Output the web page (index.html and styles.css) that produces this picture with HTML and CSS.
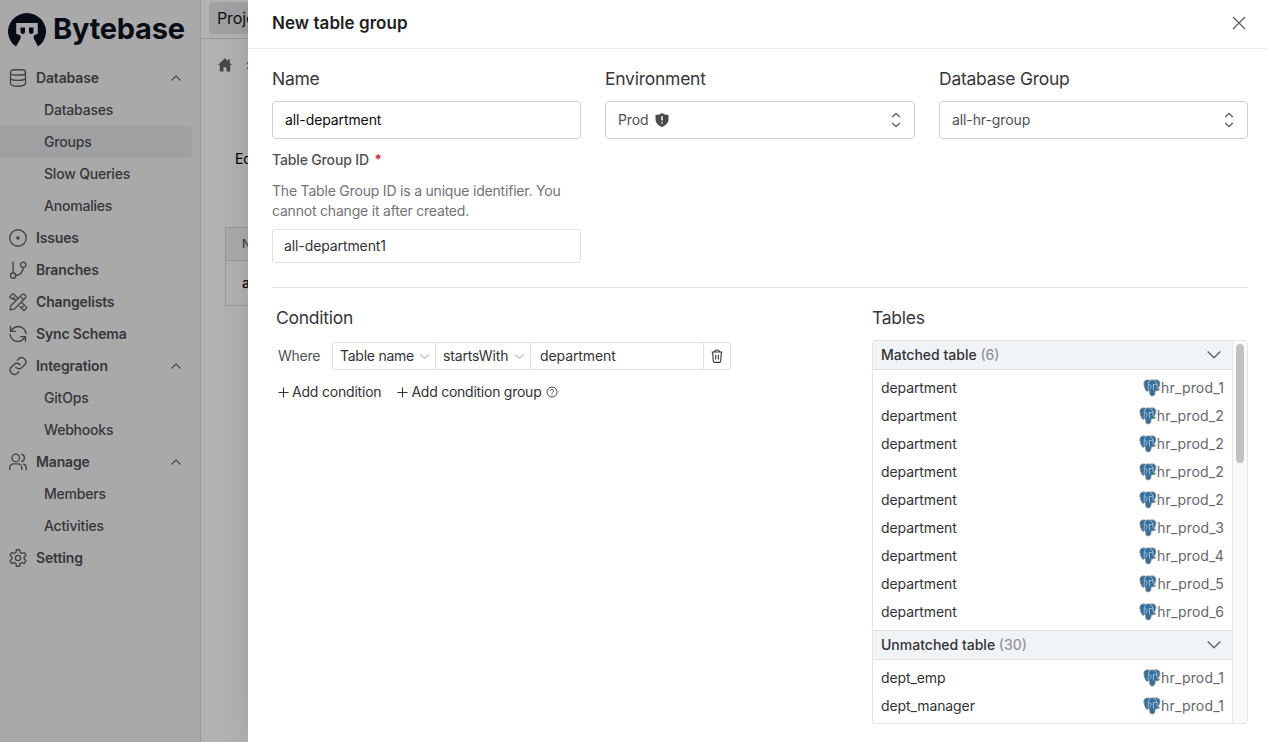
FILE: index.html
```html
<!DOCTYPE html>
<html lang="en">
<head>
<meta charset="utf-8">
<title>Bytebase</title>
<link rel="stylesheet" href="styles.css">
</head>
<body>
<svg class="defs" aria-hidden="true">
  <symbol id="chev-up" viewBox="0 0 12 8"><path d="M1.800 6.200 6 2l4.200 4.200"/></symbol>
  <symbol id="chev-down" viewBox="0 0 16 10"><path d="m1.700 1.500 6.300 6.300 6.300-6.300"/></symbol>
  <symbol id="updown" viewBox="0 0 12 16"><path d="M2.200 5 6 1.500 9.800 5M2.200 11 6 14.500 9.800 11"/></symbol>
  <symbol id="plus" viewBox="0 0 12 12"><path d="M6 .5v11M.5 6h11"/></symbol>
  <symbol id="pg" viewBox="0 0 18 18">
    <path d="M4.500 1C2.200 1 .8 2.400 1 5c.2 2.600 1.500 6.200 2.600 7.100.9.700 1.700-.3 2.300-.9l.7.3c.3 1.900 0 4.300 1.100 5 1.200.7 3.600.6 4.100-1.500l.3-3.200c1.900.1 3.800-.3 4.600-1.300-.4-.3-1.500-.1-2.200-.2 1.500-2 2.800-5.400 2.200-7C16.200 1.600 14.700.8 12.900.9c-.9 0-1.600.3-2.200.4C9.800.9 8.400.8 7.200 1.500 6.500 1.200 5.500 1 4.500 1Z" fill="#336f9e" stroke="#82888e" stroke-width="1"/>
    <path d="M6.900 2C5.300 3 5 5.500 5.300 7.300c.2 1.300 0 2.500-.3 3.300M12 2c2 1.600 2.400 4.200 2.100 6.300M6 6c1.200-.4 2.400 0 2.200 1.200-.2 1-.3 1.500-1.200 3M10.400 5.500v5.500M10.600 5.700c.9-.5 1.900-.4 2.700-.1" fill="none" stroke="#c3d3e0" stroke-width=".8" stroke-linecap="round"/>
  </symbol>
</svg>

<div class="app">
  <aside class="sidebar">
    <div class="logo">
      <svg class="logo-mark" viewBox="0 0 38 38">
        <path d="M8 35.600A19 18.500 0 1 1 30 35.600L25.800 27.500V24.500L29.800 22.800V12H8.200V22.800L12.600 24.500V27.500Z"/>
        <path d="M12.500 16.500h4.500v4.200a2.250 2.250 0 0 1-4.500 0ZM21 16.500h4.500v4.200a2.250 2.250 0 0 1-4.500 0Z"/>
      </svg>
      <span class="logo-text">Bytebase</span>
    </div>
    <nav class="nav">
      <a class="item"><svg viewBox="0 0 24 24"><rect x="2" y="1" width="20" height="7" rx="5" ry="3.500"/><path d="M2 5v14c0 2.500 4 4 10 4s10-1.500 10-4V5M2 12c0 2 4 3.200 10 3.200S22 14 22 12"/></svg><span>Database</span><svg class="caret"><use href="#chev-up"/></svg></a>
      <a class="sub">Databases</a>
      <a class="sub active">Groups</a>
      <a class="sub">Slow Queries</a>
      <a class="sub">Anomalies</a>
      <a class="item"><svg viewBox="0 0 24 24"><circle cx="12" cy="12" r="11"/><circle cx="12" cy="12" r="1.500" class="solid"/></svg><span>Issues</span></a>
      <a class="item"><svg viewBox="0 0 24 24"><path d="M5.500 1.500V16M8.500 19.500C15 19 18.500 14.500 19 8.500"/><circle cx="5.500" cy="19.500" r="3.500"/><circle cx="19" cy="5" r="3.500"/></svg><span>Branches</span></a>
      <a class="item"><svg viewBox="0 0 24 24"><path d="m15 4.500 4.500 4.500L7 21.500 1.500 22.500 2.500 17 17 2.500a3.100 3.100 0 0 1 4.500 4.500L19.500 9M9.500 9.500 1.500 6.500a1.500 1.500 0 0 1 0-2l3-3a1.500 1.500 0 0 1 2 0l6 6M5 8l2.500-2.500M14.500 18l4.500 4.500a1.500 1.500 0 0 0 2 0l2-2a1.500 1.500 0 0 0 0-2L17 13M16.500 20l2.500-2.500"/></svg><span>Changelists</span></a>
      <a class="item"><svg viewBox="0 0 24 24"><path d="M2 2v6.500h6.500M2.500 8.500C5 4 9 2 13 2a10 10 0 0 1 9.500 9.500M22 22v-6.500h-6.500M21.500 15.500C19 20 15 22 11 22a10 10 0 0 1-9.500-9.500"/></svg><span>Sync Schema</span></a>
      <a class="item"><svg viewBox="0 0 24 24"><path d="M9 13.500a5.500 5.500 0 0 0 8.300.6l4-4a5.700 5.700 0 0 0-8-8L11 4.300M15 10.500a5.500 5.500 0 0 0-8.300-.6l-4 4a5.700 5.700 0 0 0 8 8l2.300-2.300"/></svg><span>Integration</span><svg class="caret"><use href="#chev-up"/></svg></a>
      <a class="sub">GitOps</a>
      <a class="sub">Webhooks</a>
      <a class="item"><svg viewBox="0 0 24 24"><circle cx="9" cy="6.500" r="5"/><path d="M1 22v-2.500a5 5 0 0 1 5-5h6a5 5 0 0 1 5 5V22M17 1.700a5 5 0 0 1 0 9.600M19.500 15a5 5 0 0 1 3.500 4.700V22"/></svg><span>Manage</span><svg class="caret"><use href="#chev-up"/></svg></a>
      <a class="sub">Members</a>
      <a class="sub">Activities</a>
      <a class="item"><svg viewBox="0 0 24 24"><path d="M10 1h4l.9 3.700 2.200 1.200 3.400-1 2.100 3.600-2.500 2.500v2l2.500 2.500-2.100 3.600-3.400-1-2.200 1.200L14 23h-4l-.9-3.700-2.200-1.200-3.400 1-2.100-3.600L3.900 13v-2L1.400 8.500l2.100-3.600 3.400 1 2.200-1.200Z"/><circle cx="12" cy="12" r="3.500"/></svg><span>Setting</span></a>
    </nav>
  </aside>
  <main class="page">
    <header class="topbar"><span class="project">Project</span></header>
    <div class="crumbs">
      <svg viewBox="0 0 14 14"><path d="M7 .3 0 7h1.800v6.500h3.700V9.300h3v4.200h3.700V7H14l-2.200-2.200V1.300h-1.700v1.900Z"/></svg>
      <span>›</span>
    </div>
    <div class="actions">Edit</div>
    <div class="grid">
      <div class="grid-head">Name</div>
      <div class="grid-row">all-hr</div>
    </div>
  </main>
</div>
<div class="mask"></div>

<section class="drawer">
  <header class="drawer-head">
    <h1>New table group</h1>
    <svg viewBox="0 0 14 14"><path d="m1 1 12 12M13 1 1 13"/></svg>
  </header>
  <div class="drawer-body">
    <div class="fields">
      <div class="field">
        <label class="label">Name</label>
        <div class="box strong">all-department</div>
        <div class="id-label">Table Group ID <b>*</b></div>
        <p class="help">The Table Group ID is a unique identifier. You<br>cannot change it after created.</p>
        <div class="box small">all-department1</div>
      </div>
      <div class="field">
        <label class="label">Environment</label>
        <div class="box select"><span>Prod</span>
          <svg class="shield" viewBox="0 0 14 14"><path d="M7 0Q9.500 2 13.500 2v4.500C13.500 10 10.500 12.700 7 14 3.500 12.700.5 10 .5 6.500V2Q4.500 2 7 0Z" fill="#4b4b4f"/><path d="M7 3.200v4.300M7 9.300v1.200" stroke="#fff" stroke-width="1.500"/></svg>
          <svg class="updown"><use href="#updown"/></svg></div>
      </div>
      <div class="field">
        <label class="label">Database Group</label>
        <div class="box select"><span>all-hr-group</span><svg class="updown"><use href="#updown"/></svg></div>
      </div>
    </div>
    <div class="lower">
      <div class="condition">
        <h2>Condition</h2>
        <div class="expr">
          <span class="where">Where</span>
          <div class="cell factor">Table name<svg><use href="#chev-down"/></svg></div>
          <div class="cell operator">startsWith<svg><use href="#chev-down"/></svg></div>
          <div class="cell value">department</div>
          <div class="cell trash"><svg viewBox="0 0 12 14"><path d="M.6 3h10.800M3.500 3C3.500.3 8.500.3 8.500 3M1.600 3l.7 9.200q.1 1.200 1.300 1.200h4.800q1.200 0 1.300-1.200L10.400 3M4.700 5.800v4.800M7.300 5.800v4.800"/></svg></div>
        </div>
        <div class="adds">
          <span class="add"><svg><use href="#plus"/></svg>Add condition</span>
          <span class="add group"><svg><use href="#plus"/></svg>Add condition group<svg class="hint" viewBox="0 0 12 12"><circle cx="6" cy="6" r="5"/><path d="M4.200 4.700C4.500 3 7.700 3 7.700 4.900 7.700 6.100 6 6 6 7.200M6 8.200v.9"/></svg></span>
        </div>
      </div>
      <div class="tables">
        <h2>Tables</h2>
        <div class="panel">
          <div class="list">
            <div class="list-head"><span>Matched table <i>(6)</i></span><svg><use href="#chev-down"/></svg></div>
            <div class="rows">
              <div class="row"><span>department</span><span class="db"><svg><use href="#pg"/></svg>hr_prod_1</span></div>
              <div class="row"><span>department</span><span class="db"><svg><use href="#pg"/></svg>hr_prod_2</span></div>
              <div class="row"><span>department</span><span class="db"><svg><use href="#pg"/></svg>hr_prod_2</span></div>
              <div class="row"><span>department</span><span class="db"><svg><use href="#pg"/></svg>hr_prod_2</span></div>
              <div class="row"><span>department</span><span class="db"><svg><use href="#pg"/></svg>hr_prod_2</span></div>
              <div class="row"><span>department</span><span class="db"><svg><use href="#pg"/></svg>hr_prod_3</span></div>
              <div class="row"><span>department</span><span class="db"><svg><use href="#pg"/></svg>hr_prod_4</span></div>
              <div class="row"><span>department</span><span class="db"><svg><use href="#pg"/></svg>hr_prod_5</span></div>
              <div class="row"><span>department</span><span class="db"><svg><use href="#pg"/></svg>hr_prod_6</span></div>
            </div>
            <div class="list-head second"><span>Unmatched table <i>(30)</i></span><svg><use href="#chev-down"/></svg></div>
            <div class="rows">
              <div class="row"><span>dept_emp</span><span class="db"><svg><use href="#pg"/></svg>hr_prod_1</span></div>
              <div class="row"><span>dept_manager</span><span class="db"><svg><use href="#pg"/></svg>hr_prod_1</span></div>
            </div>
          </div>
          <div class="scroll"><div class="thumb"></div></div>
        </div>
      </div>
    </div>
  </div>
</section>
</body>
</html>
```
FILE: styles.css
```css
* { box-sizing: border-box; }
body { margin: 0; height: 742px; overflow: hidden; position: relative; font: 14px/20px Inter, "Liberation Sans", sans-serif; color: #333337; background: #fff; letter-spacing: -.1px; }
h1, h2, p { margin: 0; font-weight: 400; }
svg { flex: none; fill: none; stroke: currentColor; }
.defs { position: absolute; width: 0; height: 0; }

.app { display: flex; height: 742px; }
.sidebar { width: 201px; flex: none; background: #f2f2f4; border-right: 1px solid #dedee1; color: #505054; }
.logo { display: flex; align-items: center; height: 62px; padding: 0 0 3px 8px; gap: 7px; color: #0c1220; }
.logo-mark { width: 38px; height: 38px; fill: #0c1220; stroke: none; }
.logo-text { font: 700 29px/40px Inter, sans-serif; letter-spacing: -.25px; padding-bottom: 2px; }
.item { display: flex; align-items: center; height: 32px; padding: 0 18px 0 9px; gap: 9px; font-weight: 600; letter-spacing: -.15px; }
.item svg { width: 18px; height: 18px; stroke-width: 1.8; stroke-linejoin: round; stroke-linecap: round; color: #606167; overflow: visible; }
.item .solid { fill: currentColor; }
.item .caret { width: 12px; height: 8px; margin-left: auto; stroke-width: 1.2; }
.sub { display: flex; align-items: center; height: 32px; margin-right: 8px; padding-left: 44px; font-weight: 500; letter-spacing: -.2px; }
.sub.active { background: #e3e6e8; border-radius: 0 3px 3px 0; }

.page { flex: 1; overflow: hidden; }
.topbar { height: 39px; border-bottom: 1px solid #dedee0; padding: 2px 8px; }
.project { display: inline-flex; align-items: center; width: 120px; height: 32px; padding-left: 8px; background: #e4e6e8; border-radius: 4px; font-size: 16px; color: #17171a; }
.crumbs { display: flex; align-items: center; height: 20px; margin: 16px 0 0 17px; gap: 14px; }
.crumbs svg { width: 14px; height: 14px; fill: #66676c; stroke: none; }
.actions { margin: 74px 0 0 34px; color: #000; }
.grid { margin: 58px 0 0 24px; border: 1px solid #dcdce0; }
.grid-head { height: 33px; padding: 6px 16px; background: #f3f4f6; border-bottom: 1px solid #dcdce0; font-size: 12px; color: #606167; font-weight: 500; }
.grid-row { height: 44px; padding: 12px 16px; color: #000; font-weight: 500; }

.mask { position: absolute; inset: 0; background: rgba(0, 0, 0, .3); }
.drawer { position: absolute; top: 0; right: 0; bottom: 0; width: 1019px; background: #fff; box-shadow: -6px 0 16px -9px rgba(0,0,0,.06), -9px 0 28px 0 rgba(0,0,0,.03), -12px 0 48px 0 rgba(0,0,0,.02); }
.drawer-head { display: flex; align-items: center; justify-content: space-between; height: 49px; padding: 0 21px 3px 24px; border-bottom: 1px solid #ededf0; }
.drawer-head h1 { font-size: 17px; font-weight: 600; letter-spacing: .05px; color: #1f1f24; }
.drawer-head svg { width: 14px; height: 14px; stroke: #606066; stroke-width: 1.3; }
.drawer-body { padding: 16px 19px 0 24px; }
.fields { display: grid; grid-template-columns: 309px 310px 309px; gap: 24px; height: 223px; border-bottom: 1px solid #e5e5e8; }
.label { display: block; height: 36px; line-height: 28px; font-size: 17.500px; }
.label, h2 { color: #37373b; letter-spacing: -.25px; }
.box { display: flex; align-items: center; height: 38px; padding: 0 12px; border: 1px solid #cfd1d5; border-radius: 4px; color: #3d3d42; }
.box.strong { color: #0c0c0e; }
.box.small { height: 34px; padding: 0 11px; margin-top: 8px; border-color: #dfdfe4; border-radius: 3px; color: #333338; }
.select { color: #505055; }
.shield { width: 14px; height: 14px; margin-left: 6px; stroke: none; }
.updown { width: 12px; height: 16px; margin-left: auto; stroke: #606166; stroke-width: 1.400; }
.id-label { margin-top: 11px; color: #505056; font-weight: 500; letter-spacing: -.15px; }
.id-label b { color: #c8232c; margin-left: 2px; font-weight: 500; }
.help { margin-top: 11px; color: #727277; letter-spacing: -.2px; }

.lower { display: flex; justify-content: space-between; padding-top: 16px; }
.condition { padding-left: 4px; }
h2 { height: 28px; line-height: 28px; font-size: 17.500px; }
.expr { display: flex; align-items: center; margin-top: 10px; padding-left: 2px; }
.where { width: 54px; color: #505056; letter-spacing: -.25px; }
.cell { display: flex; align-items: center; height: 28px; border: 1px solid #e0e0e5; border-right: 0; }
.factor { width: 103px; padding-left: 7px; border-radius: 3px 0 0 3px; letter-spacing: -.25px; }
.operator { width: 95px; padding-left: 7px; letter-spacing: -.15px; }
.factor svg, .operator svg { width: 11px; height: 7px; margin: 0 5px 0 auto; stroke: #bcbcc2; stroke-width: 1.500; }
.value { width: 173px; padding-left: 9px; }
.trash { width: 28px; justify-content: center; border-right: 1px solid #e0e0e5; border-radius: 0 3px 3px 0; }
.trash svg { width: 12px; height: 14px; stroke-width: 1.100; }
.adds { display: flex; gap: 16px; padding: 12px 0 0 2px; }
.add { display: flex; align-items: center; gap: 3px; letter-spacing: -.2px; }
.add.group { letter-spacing: -.25px; }
.add svg { width: 11px; height: 11px; stroke-width: 1.200; }
.add .hint { width: 12px; height: 12px; margin-left: 2px; stroke-width: .9; }

.tables { width: 376px; }
.panel { display: flex; height: 384px; margin-top: 8px; border: 1px solid #e2e4e7; border-radius: 3px; overflow: hidden; }
.list { flex: 1; }
.list-head { display: flex; align-items: center; justify-content: space-between; height: 29px; padding: 0 10px 0 8px; background: #f1f4f6; border-bottom: 1px solid #dfe2e5; font-weight: 500; letter-spacing: 0; }
.list-head.second { height: 30px; border-top: 1px solid #dfe2e5; }
.list-head i { font-style: normal; color: #94959b; }
.list-head svg { width: 16px; height: 10px; stroke: #66676c; stroke-width: 1.500; }
.rows { padding: 4px 0; }
.row { display: flex; align-items: center; justify-content: space-between; height: 28px; padding: 0 8px; }
.db { display: flex; align-items: center; color: #66676d; letter-spacing: .15px; }
.db svg { width: 18px; height: 18px; stroke: none; }
.scroll { width: 15px; padding: 3px 3px 0; background: #fafafa; border-left: 1px solid #e5e5e8; }
.thumb { width: 8px; height: 119px; border-radius: 4px; background: #c1c1c3; }
```
